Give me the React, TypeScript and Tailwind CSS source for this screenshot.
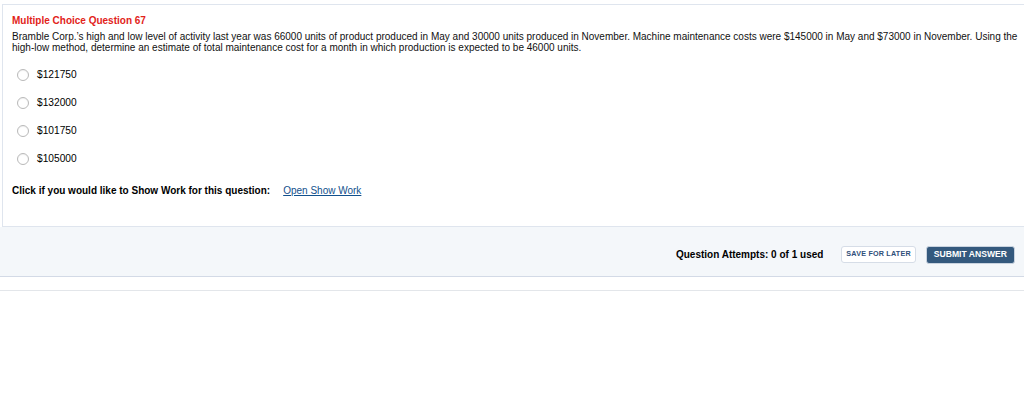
export default function App() {
  const options = ["$121750", "$132000", "$101750", "$105000"];
  return (
    <div className="min-h-[417px] bg-white pt-1 font-['Liberation_Sans',Arial,sans-serif] text-black">
      {/* Question card */}
      <div className="ml-[2px] border-t border-l border-b border-[#dfe5ee] bg-white pl-[9px] pr-[2px] pt-[10px] pb-[29px]">
        <div className="text-[10px] font-bold leading-[12px] text-[#e2231a]">Multiple Choice Question 67</div>
        <p className="mt-[4px] text-[10px] leading-[11px] text-[#111]">
          Bramble Corp.’s high and low level of activity last year was 66000 units of product produced in May and 30000 units produced in November. Machine maintenance costs were $145000 in May and $73000 in November. Using the high-low method, determine an estimate of total maintenance cost for a month in which production is expected to be 46000 units.
        </p>
        <div className="mt-[15px] flex flex-col gap-[15px] pl-[5px]">
          {options.map((o) => (
            <label key={o} className="flex h-[13px] items-center gap-[8px] text-[10.2px] leading-[13px]">
              <span className="h-[12px] w-[12px] rounded-full border border-[#b9b9b9] bg-white shadow-[inset_0_1px_1px_rgba(0,0,0,0.06)]" />
              <span>{o}</span>
            </label>
          ))}
        </div>
        <div className="mt-[20px] flex items-center text-[10px] leading-[12px]">
          <span className="font-bold">Click if you would like to Show Work for this question:</span>
          <a className="ml-[13px] text-[#12508c] underline">Open Show Work</a>
        </div>
      </div>
      {/* Footer bar */}
      <div className="flex h-[50px] items-center justify-end border-b border-[#d3dae6] bg-[#f4f7fa] pt-[6px] pr-[9px]">
        <span className="text-[10px] font-bold">Question Attempts: 0 of 1 used</span>
        <button className="ml-[18px] h-[17px] rounded-[3px] border border-[#d6dde7] bg-white px-[4px] text-[7.2px] font-bold tracking-[0.2px] text-[#2f4f7a]">
          SAVE FOR LATER
        </button>
        <button className="ml-[10px] h-[18px] rounded-[3px] border border-[#c9d3df] bg-[#34597d] px-[7px] text-[8.6px] font-bold text-white">
          SUBMIT ANSWER
        </button>
      </div>
      <div className="mt-[13px] border-t border-[#e3e6ea]" />
    </div>
  );
}
